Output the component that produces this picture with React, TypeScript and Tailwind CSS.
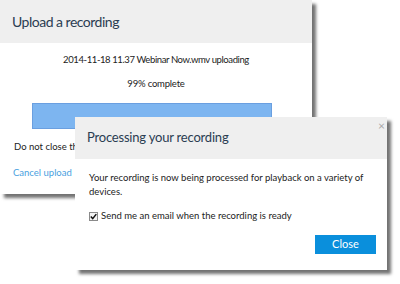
import React from 'react';

const font = { fontFamily: 'Lato, "Noto Sans", sans-serif' };

const UploadDialog: React.FC = () => (
  <div className="absolute left-0 top-0 w-[312px] h-[194px] bg-white shadow-[4px_4px_3px_rgba(0,0,0,0.55)]">
    <div className="h-[43px] bg-[#efefef] px-[12px] flex items-center">
      <h2 className="text-[14px] tracking-[-0.5px] text-[#2b3d52]">Upload a recording</h2>
    </div>
    <div className="flex flex-col items-center pt-[10px] text-[9.5px] text-[#222]">
      <p className="leading-[14px] tracking-[-0.4px]">2014-11-18 11.37 Webinar Now.wmv uploading</p>
      <p className="leading-[14px] mt-[10px] tracking-[-0.2px]">99% complete</p>
    </div>
    <div className="mt-[12px] ml-[32px] w-[240px] h-[26px] bg-[#7db5f0] border border-[#6a9fe0]"></div>
    <p className="mt-[11px] pl-[14px] text-[9.5px] text-[#222] leading-[14px]">
      Do not close this window until the upload is complete.
    </p>
    <a href="#" className="block mt-[12px] pl-[13px] text-[9.5px] text-[#4a9fe0] leading-[14px]">
      Cancel upload
    </a>
  </div>
);

const ProcessingDialog: React.FC = () => (
  <div className="absolute left-[75px] top-[117px] w-[312px] h-[153px] bg-white shadow-[4px_4px_3px_rgba(0,0,0,0.55)] flex flex-col">
    <div className="relative h-[42px] bg-[#efefef] px-[12px] flex items-center">
      <h2 className="text-[13px] tracking-[-0.2px] text-[#2b3d52]">Processing your recording</h2>
      <span className="absolute right-[2px] top-[2px] text-[12px] text-[#aaa] leading-[14px]">×</span>
    </div>
    <div className="px-[14px] pt-[12px] text-[9.5px] text-[#222]">
      <p className="leading-[14px]">
        Your recording is now being processed for playback on a variety of
        <br />
        devices.
      </p>
      <label className="flex items-center gap-[3px] mt-[10px] leading-[14px]">
        {/* old-style checked box: light face, grey border, black tick */}
        <span className="w-[9px] h-[9px] border border-[#8a8a8a] bg-[#f3f3f3] flex items-center justify-center">
          <svg width="7" height="7" viewBox="0 0 7 7">
            <path d="M0.8 3.6 L2.7 5.6 L6.3 1.1" fill="none" stroke="#111" strokeWidth="1.5" />
          </svg>
        </span>
        <span>Send me an email when the recording is ready</span>
      </label>
      <div className="flex justify-end mt-[12px]">
        <button className="w-[61px] h-[19px] bg-[#0a8fdc] text-white text-[11px] mr-[-3px]">Close</button>
      </div>
    </div>
  </div>
);

export default function App() {
  return (
    <div className="relative w-[400px] h-[284px] bg-white overflow-hidden" style={font}>
      <UploadDialog />
      <ProcessingDialog />
    </div>
  );
}
